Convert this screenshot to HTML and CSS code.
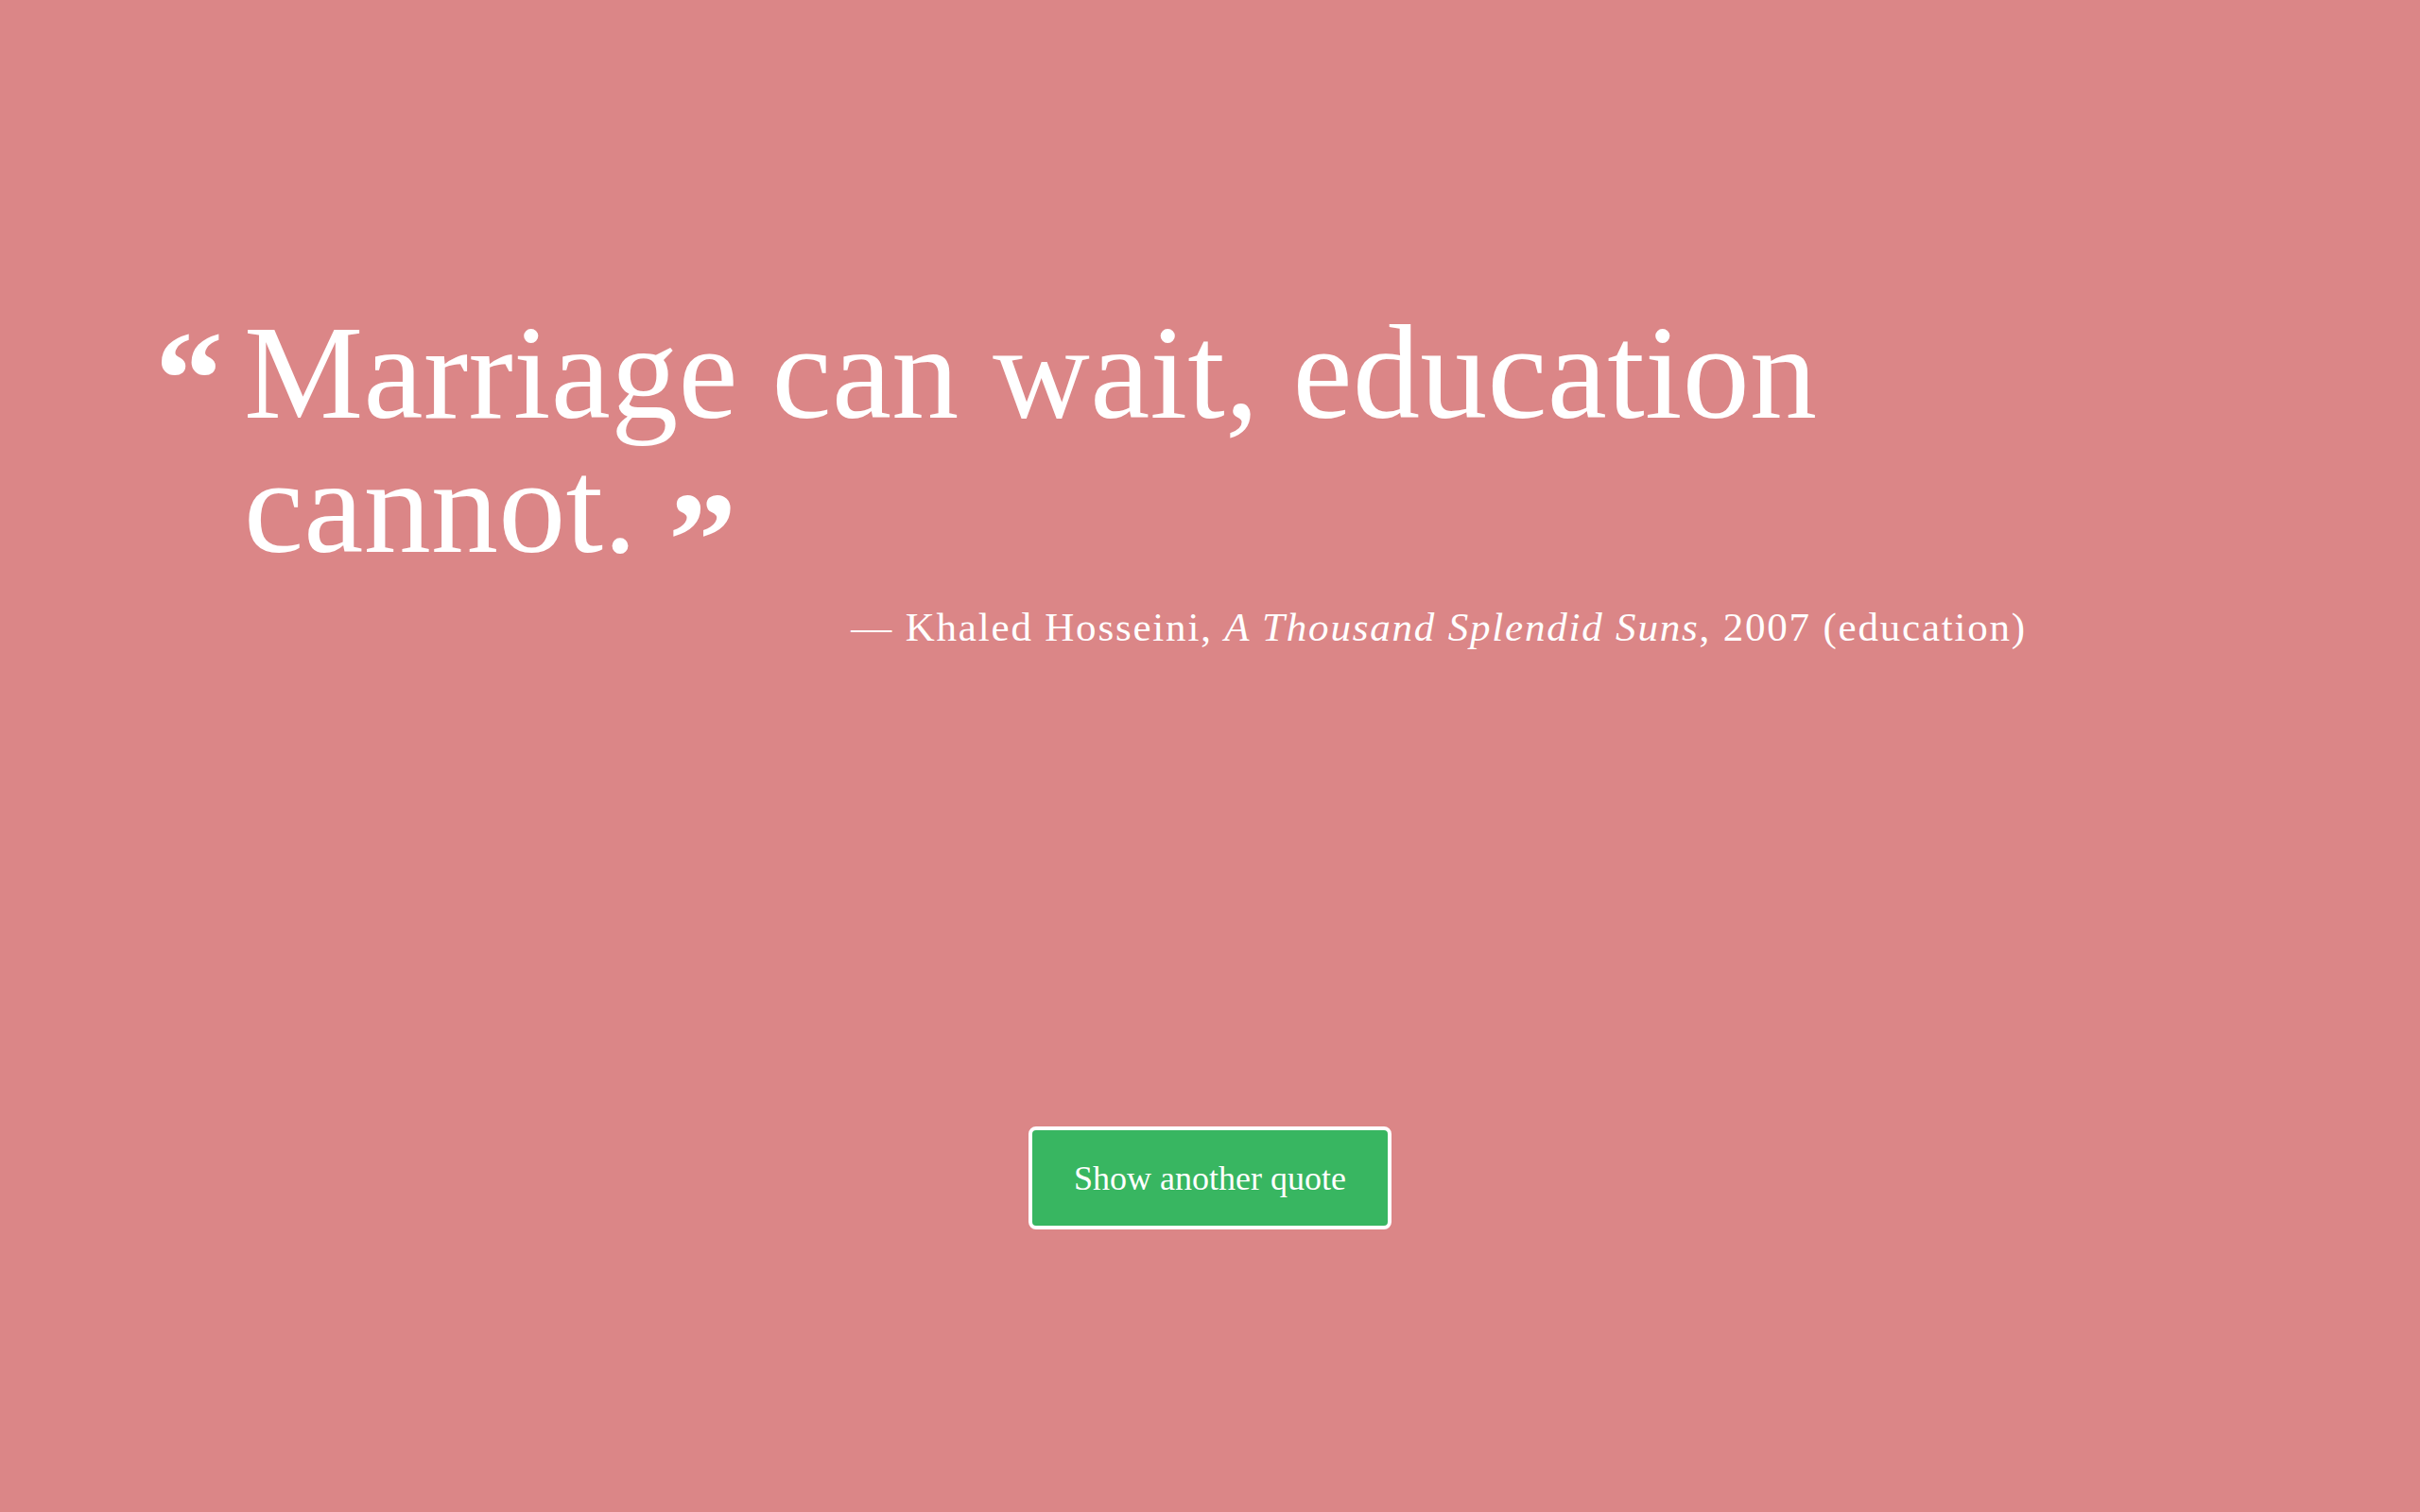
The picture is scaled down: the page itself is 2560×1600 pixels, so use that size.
FILE: index.html
```html
<!DOCTYPE html>
<html lang="en">
<head>
<meta charset="utf-8">
<title>Random Quote Machine</title>
<link rel="stylesheet" href="styles.css">
</head>
<body>
<main class="quote-box">
  <div class="quote-row">
    <span class="mark-open">“</span>
    <p class="quote-text">Marriage can wait, education cannot.</p>
  </div>
  <p class="quote-author">— Khaled Hosseini, <cite>A Thousand Splendid Suns</cite>, 2007 (education)</p>
  <div class="actions">
    <button class="new-quote" type="button">Show another quote</button>
  </div>
</main>
</body>
</html>
```

FILE: styles.css
```css
html, body {
  margin: 0;
  padding: 0;
}

body {
  background: #db8687;
  color: #ffffff;
  font-family: "Liberation Serif", "Times New Roman", serif;
  min-height: 100vh;
}

.quote-box {
  padding: 324px 416px 0 164px;
}

.quote-row {
  display: flex;
  align-items: flex-start;
}

.mark-open {
  flex: 0 0 94px;
  font-size: 144px;
  font-weight: 700;
  line-height: 141px;
  position: relative;
  top: 6px;
}

.quote-text {
  flex: 1;
  margin: 0;
  font-size: 142px;
  line-height: 141px;
  font-weight: 400;
  letter-spacing: 0.3px;
}

.quote-text::after {
  content: "”";
  margin-left: 33px;
  font-size: 144px;
  font-weight: 700;
  letter-spacing: 0;
  position: relative;
  top: 36px;
}

.quote-author {
  margin: 27px 0 0;
  text-align: right;
  font-size: 43px;
  line-height: 60px;
  letter-spacing: 1.8px;
}

.quote-author cite {
  font-style: italic;
}

.actions {
  display: flex;
  justify-content: center;
  margin-top: 498px;
  margin-left: -164px;
  margin-right: -416px;
}

.new-quote {
  width: 384px;
  height: 109px;
  box-sizing: border-box;
  border: 4px solid #ffffff;
  border-radius: 8px;
  background: #38b661;
  color: #ffffff;
  font-family: "Liberation Serif", "Times New Roman", serif;
  font-size: 36px;
  line-height: 1;
  padding: 0;
  display: flex;
  align-items: center;
  justify-content: center;
  cursor: pointer;
}
```
